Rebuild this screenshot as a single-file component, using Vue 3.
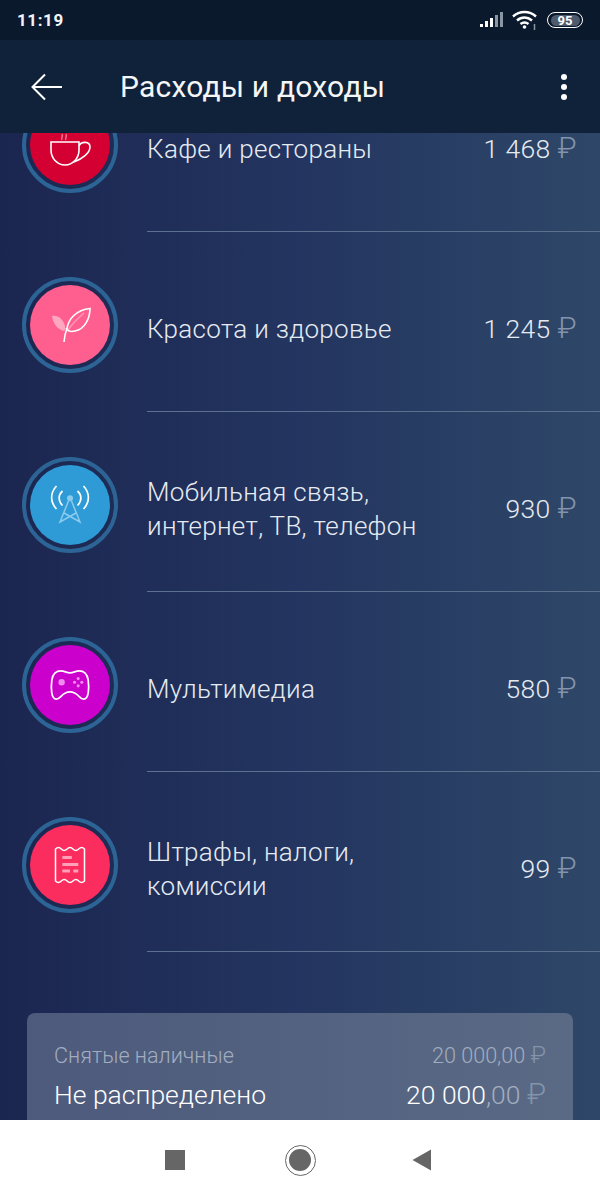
<script setup>
const rows = [
  { id: "cafe", lines: ["Кафе и рестораны"], sum: "1 468", color: "#d50032" },
  { id: "beauty", lines: ["Красота и здоровье"], sum: "1 245", color: "#ff5f8f" },
  { id: "mobile", lines: ["Мобильная связь,", "интернет, ТВ, телефон"], sum: "930", color: "#2e9bd6" },
  { id: "media", lines: ["Мультимедиа"], sum: "580", color: "#cc00cc" },
  { id: "fines", lines: ["Штрафы, налоги,", "комиссии"], sum: "99", color: "#fb2c5e" },
];
</script>

<template>
  <div class="screen">
    <header class="top">
      <div class="status">
        <span class="time">11:19</span>
        <div class="status-icons">
          <svg width="23" height="18" viewBox="0 0 23 18">
            <rect x="0" y="13" width="3" height="3" fill="#fff" />
            <rect x="5" y="10" width="3" height="6" fill="#fff" />
            <rect x="10" y="7" width="3" height="9" fill="#fff" />
            <rect x="15" y="4" width="3" height="12" fill="#8b96a3" />
            <rect x="20" y="1" width="3" height="15" fill="#8b96a3" />
          </svg>
          <svg class="wifi" width="26" height="20" viewBox="0 0 26 20" fill="none" stroke="#fff" stroke-width="2.4">
            <path d="M1 6.500C7.500 .5 17.500 .5 24 6.500" />
            <path d="M5 10.500C9.500 6.500 15.500 6.500 20 10.500" />
            <path d="M8.500 14C11 12 14 12 16.500 14" />
            <circle cx="12.500" cy="17" r="1.800" fill="#fff" stroke="none" />
            <path d="M22.500 14v6" stroke="#8b96a3" stroke-width="1.500" />
          </svg>
          <div class="battery"><span>95</span></div>
        </div>
      </div>
      <div class="toolbar">
        <svg class="back" width="32" height="28" viewBox="0 0 32 28" fill="none" stroke="#fff" stroke-width="2">
          <path d="M31 14H2M14 1.500L1.500 14L14 26.500" />
        </svg>
        <h1>Расходы и доходы</h1>
        <div class="more"><i></i><i></i><i></i></div>
      </div>
    </header>

    <main class="content">
      <ul class="list">
        <li v-for="row in rows" :key="row.id" class="row">
          <div class="ring">
            <div class="disc" :style="{ background: row.color }">
              <svg v-if="row.id === 'cafe'" width="42" height="42" viewBox="0 0 42 42" fill="none" stroke="#fff" stroke-width="1.600">
                <path d="M13 16c-1.500-2 1.500-3 0-6M17 16c-1.500-2 1.500-3 0-6" stroke-opacity=".45" />
                <path d="M2 18H30V26C30 34 24 41 16 41S2 34 2 26Z" />
                <path d="M30 22C32 17 41 17 41 23C41 29 33 35 25 38" />
              </svg>
              <svg v-else-if="row.id === 'beauty'" width="42" height="42" viewBox="0 0 42 42" fill="none" stroke="#fff" stroke-width="1.600">
                <path d="M3 12C9 11 14 15 16 22C16 24 16 26 15.500 27C9 26 4 20 3 12Z" fill="#fff" fill-opacity=".45" stroke="none" />
                <path d="M15 38C15.500 32 16.500 28 18 24.500C19.500 15 27 6 41 4.500C41 14 36 25 26 27C22 28 18.500 27 17 24" />
                <path d="M19 26C23 20 28 15 35 9" stroke-opacity=".35" />
              </svg>
              <svg v-else-if="row.id === 'mobile'" width="42" height="46" viewBox="0 0 42 46" fill="none" stroke="#fff" stroke-width="1.700">
                <path d="M7.500 4C1 11 1 20 7.500 27M34.500 4C41 11 41 20 34.500 27M13.500 9C9 13 9 19 13.500 23.500M28.500 9C33 13 33 19 28.500 23.500" />
                <g stroke="#8ccbee" stroke-width="1.500">
                  <circle cx="21" cy="16.300" r="3" fill="#8ccbee" stroke="none" />
                  <path d="M19.500 19L11 40L27 31M22.500 19L31 40L15 31" />
                </g>
              </svg>
              <svg v-else-if="row.id === 'media'" width="40" height="33" viewBox="0 0 44 36" fill="none" stroke="#fff" stroke-width="1.900">
                <path d="M12 2C16 2 18 4 22 4S28 2 32 2C38 2 41 6 42 12C43 20 43 33 37 33C32 33 31 25 22 25S12 33 7 33C1 33 1 20 2 12C3 6 6 2 12 2Z" />
                <circle cx="12.800" cy="14.400" r="3.500" fill="#f08cf0" stroke="none" />
                <g fill="#f08cf0" stroke="none">
                  <circle cx="27" cy="14.400" r="1.700" /><circle cx="35" cy="14.400" r="1.700" />
                  <circle cx="31" cy="10.400" r="1.700" /><circle cx="31" cy="18.400" r="1.700" />
                </g>
              </svg>
              <svg v-else width="32" height="38" viewBox="0 0 32 38" fill="none" stroke="#fff" stroke-width="1.500">
                <path d="M1.500 3q3-3 5.800 0t5.800 0t5.800 0t5.800 0t5.800 0V35q-3 3-5.800 0t-5.800 0t-5.800 0t-5.800 0t-5.800 0Z" />
                <g fill="#ffa0b8" stroke="none">
                  <rect x="8.300" y="10" width="9.500" height="3" />
                  <rect x="8.300" y="17" width="16" height="3" />
                  <rect x="8.300" y="23.500" width="7.700" height="3" />
                  <rect x="19.300" y="23.500" width="5" height="3" />
                </g>
              </svg>
            </div>
          </div>
          <div class="info">
            <div class="name">
              <div v-for="line in row.lines" :key="line">{{ line }}</div>
            </div>
            <div class="sum">{{ row.sum }} <span class="rub">₽</span></div>
          </div>
        </li>
      </ul>

      <section class="card">
        <div class="card-line muted">
          <span>Снятые наличные</span>
          <span>20 000,00 <span class="rub">₽</span></span>
        </div>
        <div class="card-line main">
          <span>Не распределено</span>
          <span>20 000<span class="cents">,00 <span class="rub">₽</span></span></span>
        </div>
      </section>
    </main>

    <nav class="navbar">
      <span class="nav-square"></span>
      <span class="nav-circle"><i></i></span>
      <svg class="nav-back" width="20" height="22" viewBox="0 0 20 22"><path d="M0.500 11L19 .500V21.500Z" fill="#666" /></svg>
    </nav>
  </div>
</template>

<style>
html,
body {
  margin: 0;
  background: #1c2750;
}
</style>

<style scoped>
.screen {
  width: 600px;
  height: 1200px;
  display: flex;
  flex-direction: column;
  overflow: hidden;
  font-family: Roboto, "Liberation Sans", sans-serif;
  color: #fff;
}

.top {
  position: relative;
  z-index: 2;
  flex: none;
}

.status {
  height: 40px;
  background: #0b192d;
  display: flex;
  align-items: center;
  justify-content: space-between;
  padding: 0 17px;
  box-sizing: border-box;
}

.time {
  font-size: 17px;
  font-weight: 700;
  letter-spacing: 0.6px;
  color: #f2f4f6;
}

.status-icons {
  display: flex;
  align-items: center;
  gap: 9px;
}

.battery {
  width: 34px;
  height: 14px;
  border: 1.500px solid #fff;
  border-radius: 9px;
  display: flex;
  align-items: center;
  justify-content: center;
}

.battery span {
  width: 29px;
  height: 11px;
  border-radius: 6px;
  background: #4e5b6c;
  font-size: 13px;
  line-height: 11px;
  font-weight: 700;
  text-align: center;
}

.toolbar {
  height: 93px;
  background: #10223a;
  display: flex;
  align-items: center;
  padding: 0 33px 0 31px;
  box-sizing: border-box;
}

.toolbar h1 {
  margin: 0 0 0 57px;
  flex: 1;
  font-size: 30px;
  font-weight: 400;
  letter-spacing: 0.2px;
  color: #f4f6f8;
}

.more {
  display: flex;
  flex-direction: column;
  gap: 4px;
}

.more i {
  display: block;
  width: 6px;
  height: 6px;
  border-radius: 50%;
  background: #fff;
}

.content {
  flex: 1;
  min-height: 0;
  overflow: hidden;
  background: linear-gradient(90deg, #1b2650 0%, #233560 50%, #2e4768 100%);
}

.list {
  list-style: none;
  margin: -81px 0 0;
  padding: 0;
}

.row {
  height: 180px;
  display: flex;
  align-items: center;
  padding-left: 22px;
}

.ring {
  flex: none;
  width: 96px;
  height: 96px;
  margin-top: 6px;
  box-sizing: border-box;
  border: 4px solid #2d6496;
  border-radius: 50%;
  display: flex;
  align-items: center;
  justify-content: center;
}

.disc {
  width: 80px;
  height: 80px;
  border-radius: 50%;
  display: flex;
  align-items: center;
  justify-content: center;
}

.info {
  flex: 1;
  height: 100%;
  margin-left: 29px;
  padding: 16px 23px 0 0;
  box-sizing: border-box;
  border-bottom: 1px solid #5c7190;
  display: flex;
  align-items: center;
  justify-content: space-between;
  font-weight: 300;
  color: #e6ebf2;
}

.name {
  margin-bottom: 2px;
  font-size: 26px;
  line-height: 34px;
  letter-spacing: 0.3px;
}

.sum {
  margin-bottom: 2px;
  font-size: 26.5px;
  letter-spacing: 0.4px;
}

.rub {
  font-size: 1.12em;
  line-height: 1;
  color: #8394ab;
}

.card {
  margin: 61px 27px 0;
  height: 130px;
  padding: 27px 27px 0;
  box-sizing: border-box;
  border-radius: 8px;
  background: linear-gradient(90deg, #4d5a7c 0%, #5a6a85 100%);
}

.card-line {
  display: flex;
  justify-content: space-between;
  font-weight: 300;
}

.muted {
  font-size: 21.6px;
  line-height: 32px;
  color: #a3adc0;
}

.main {
  margin-top: 7px;
  font-size: 26.5px;
  line-height: 32px;
  color: #fff;
}

.cents {
  color: #a3adc0;
}

.navbar {
  position: relative;
  z-index: 2;
  flex: none;
  height: 80px;
  padding-right: 4px;
  background: #fff;
  display: flex;
  align-items: center;
  justify-content: center;
  gap: 98px;
}

.nav-square {
  width: 20px;
  height: 20px;
  margin-right: 2px;
  background: #666;
}

.nav-circle {
  width: 29px;
  height: 29px;
  border: 1.500px solid #666;
  border-radius: 50%;
  display: flex;
  align-items: center;
  justify-content: center;
}

.nav-circle i {
  display: block;
  width: 22px;
  height: 22px;
  border-radius: 50%;
  background: #666;
}

.nav-back {
  margin-left: -2px;
}
</style>
